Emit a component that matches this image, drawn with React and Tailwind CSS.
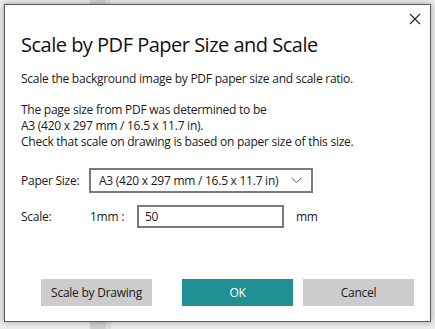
import React from "react";

export default function App() {
  const font = { fontFamily: '"Open Sans", "Noto Sans", sans-serif' };
  return (
    <div className="relative w-[435px] h-[329px] bg-[#ececec] overflow-hidden" style={font}>
      <div className="absolute left-[90px] top-0 w-[16px] h-[329px] bg-[#cfcfcf]" />
      <div className="absolute left-[106px] top-0 w-[5px] h-[329px] bg-[#dedede]" />
      <div className="relative ml-[4px] mt-[4px] w-[427px] h-[318px] border border-[#5c5c5c] bg-white shadow-[0_0_6px_rgba(0,0,0,0.35)] flex flex-col text-[12px] tracking-[-0.25px] text-[#1a1a1a]">
        <div className="flex justify-end pt-[7px] pr-[9px] h-[20px]">
          <svg width="12" height="12" viewBox="0 0 12 12" className="mt-[1px]">
            <path d="M1 1 L11 11 M11 1 L1 11" stroke="#222" strokeWidth="1.1" fill="none" />
          </svg>
        </div>
        <div className="pl-[16px] flex flex-col">
          <div className="text-[20px] leading-[26px] mt-[7px] text-[#111] tracking-[-0.5px]">Scale by PDF Paper Size and Scale</div>
          <div className="mt-[13px] leading-[16px]">Scale the background image by PDF paper size and scale ratio.</div>
          <div className="mt-[15px] leading-[16px]">
            <div>The page size from PDF was determined to be</div>
            <div>A3 (420 x 297 mm / 16.5 x 11.7 in).</div>
            <div>Check that scale on drawing is based on paper size of this size.</div>
          </div>
          <div className="flex items-center mt-[18px]">
            <div className="w-[68px]">Paper Size:</div>
            <div className="w-[224px] h-[25px] border-2 border-[#7a7a7a] flex items-center justify-between pl-[8px] pr-[9px]">
              <span>A3 (420 x 297 mm / 16.5 x 11.7 in)</span>
              <svg width="11" height="7" viewBox="0 0 11 7">
                <path d="M0.5 0.8 L5.5 5.8 L10.5 0.8" stroke="#555" strokeWidth="1" fill="none" />
              </svg>
            </div>
          </div>
          <div className="flex items-center mt-[12px]">
            <div className="w-[69px]">Scale:</div>
            <div className="w-[47px]">1mm :</div>
            <div className="w-[147px] h-[23px] border-2 border-[#7a7a7a] flex items-center pl-[6px]">50</div>
            <div className="ml-[12px]">mm</div>
          </div>
        </div>
        <div className="flex mt-auto mb-[15px] pl-[36px] text-[12px]">
          <div className="w-[111px] h-[27px] bg-[#cccccc] flex items-center justify-center">Scale by Drawing</div>
          <div className="w-[111px] h-[27px] bg-[#1f9094] text-white flex items-center justify-center ml-[30px]">OK</div>
          <div className="w-[111px] h-[27px] bg-[#cccccc] flex items-center justify-center ml-[10px]">Cancel</div>
        </div>
      </div>
    </div>
  );
}
